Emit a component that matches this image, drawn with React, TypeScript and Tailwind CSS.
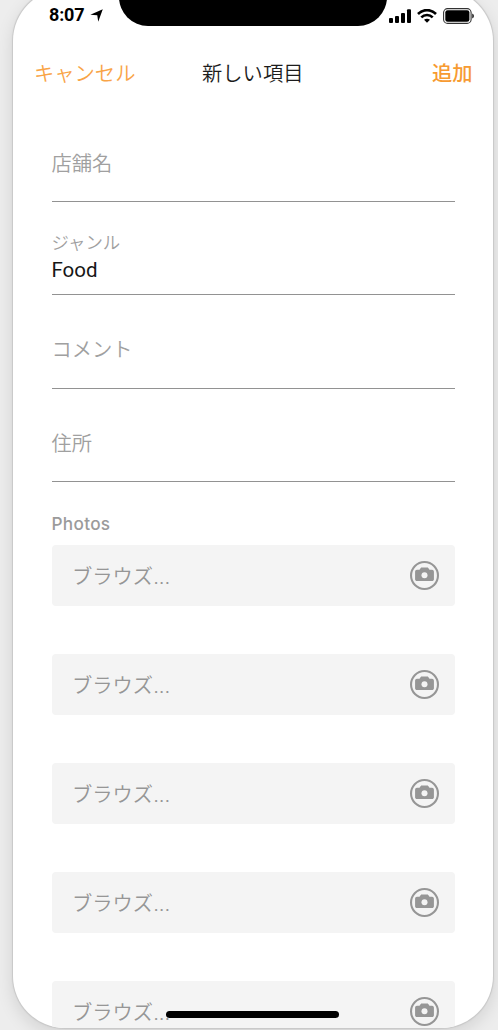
const JP = "font-['Inter','Noto_Sans_CJK_JP',sans-serif]";

function StatusBar() {
  return (
    <div className="relative flex h-[38px] shrink-0 items-start justify-between pl-[36px] pr-[18px] text-black">
      <div className="flex items-center pt-[16px]">
        <span className="font-['Roboto',sans-serif] text-[18px] font-bold leading-5 tracking-[-0.2px]">8:07</span>
        <svg className="ml-[6px] mt-px h-[13px] w-[13px]" viewBox="0 0 12 12" fill="currentColor">
          <path d="M11.8.2 7.6 11.8 6.7 5.8.3 5.2Z" />
        </svg>
      </div>
      <div className="absolute left-[106px] top-0 h-[37px] w-[268px] rounded-b-[29px] bg-black" />
      <div className="flex items-center pt-[19px]">
        <svg className="h-[14px] w-[22px]" viewBox="0 0 22 14" fill="currentColor">
          <rect x="0" y="9" width="4" height="5" rx="1" />
          <rect x="6" y="7" width="4" height="7" rx="1" />
          <rect x="12" y="4" width="4" height="10" rx="1" />
          <rect x="18" y="0.3" width="4" height="13.7" rx="1" />
        </svg>
        <svg className="ml-[6px] h-[14px] w-5" viewBox="0 0 20 14" fill="none" stroke="currentColor" strokeWidth="2.6">
          <path d="M1 5C6-.2 14-.2 19 5" />
          <path d="M4.3 8.4c3.1-3.2 8.3-3.2 11.4 0" />
          <path d="m7 10.8 3 3 3-3c-1.7-1.5-4.3-1.5-6 0Z" fill="currentColor" stroke="none" />
        </svg>
        <svg className="ml-[6px] h-4 w-8" viewBox="0 0 32 16">
          <rect x="0.6" y="0.6" width="27.5" height="14.8" rx="4" fill="none" stroke="#333" strokeWidth="1.1" />
          <rect x="2.3" y="2.3" width="24.1" height="11.4" rx="2.3" />
          <path d="M29.3 5.5c2 .8 2 4.2 0 5Z" />
        </svg>
      </div>
    </div>
  );
}

function Field({ label, value }: { label: string; value?: string }) {
  return (
    <div className="h-[93.4px] shrink-0 border-b border-[#929292]">
      {value ? (
        <div className="pt-[29px]">
          <div className="text-[17.4px] font-[350] leading-6 text-[#a0a0a0]">{label}</div>
          <div className="mt-[3px] font-['Roboto',sans-serif] text-[20.5px] leading-6 text-[#161616]">{value}</div>
        </div>
      ) : (
        <div className="pt-[40px] text-[20.3px] font-[350] leading-[30px] text-[#a0a0a0]">{label}</div>
      )}
    </div>
  );
}

function CameraIcon() {
  return (
    <svg className="h-[29px] w-[29px] text-[#969696]" viewBox="0 0 28 28" fill="none">
      <circle cx="14" cy="14" r="13" stroke="currentColor" strokeWidth="2" />
      <path
        d="M10 7.2 10.8 6.3h6.4l.8.9 .8 1.3h2.5c1 0 1.8.8 1.8 1.8v7.2c0 1-.8 1.8-1.8 1.8H6.7c-1 0-1.8-.8-1.8-1.8v-7.2c0-1 .8-1.8 1.8-1.8h2.5Z"
        fill="currentColor"
      />
      <circle cx="14" cy="13.8" r="2.9" fill="#f4f4f4" />
    </svg>
  );
}

function PhotoRow() {
  return (
    <div className="flex h-[61px] shrink-0 items-center justify-between rounded bg-[#f4f4f4] pl-[20.5px] pr-[16px]">
      <span className="pt-[3px] text-[20.3px] font-[350] leading-[30px] text-[#969696]">ブラウズ...</span>
      <CameraIcon />
    </div>
  );
}

export default function App() {
  return (
    <div className="h-[1030px] w-[498px] overflow-hidden bg-[#ededed]">
      <div
        className={`relative -mt-[11px] ml-[13px] flex h-[1039px] w-[479.5px] flex-col overflow-hidden rounded-[52px] bg-white shadow-[0_0_1px_0.5px_#c8c8c8,0_6px_18px_rgba(0,0,0,0.12)] ${JP}`}
      >
        <StatusBar />
        <header className="grid h-[92px] shrink-0 grid-cols-3 items-center pl-[21px] pr-[20px] pt-[2px] text-[20.3px] leading-[30px]">
          <button className="text-left font-[350] text-[#f9a447]">キャンセル</button>
          <h1 className="-ml-px text-center font-[350] text-[#1c1c1c]">新しい項目</h1>
          <button className="text-right font-medium text-[#f79b32]">追加</button>
        </header>
        <main className="flex flex-col pl-[38.5px] pr-[38px]">
          <div className="-mt-[10.3px] flex flex-col">
            <Field label="店舗名" />
            <Field label="ジャンル" value="Food" />
            <Field label="コメント" />
            <Field label="住所" />
          </div>
          <div className="mb-[9px] mt-[30.2px] font-['Inter',sans-serif] text-[17.2px] font-medium leading-6 tracking-[0.3px] text-[#9b9b9b]">
            Photos
          </div>
          <div className="flex flex-col gap-[47.85px]">
            <PhotoRow />
            <PhotoRow />
            <PhotoRow />
            <PhotoRow />
            <PhotoRow />
          </div>
        </main>
        <div className="absolute bottom-[10px] left-[153.4px] h-[7px] w-[173px] rounded-full bg-black" />
      </div>
    </div>
  );
}
